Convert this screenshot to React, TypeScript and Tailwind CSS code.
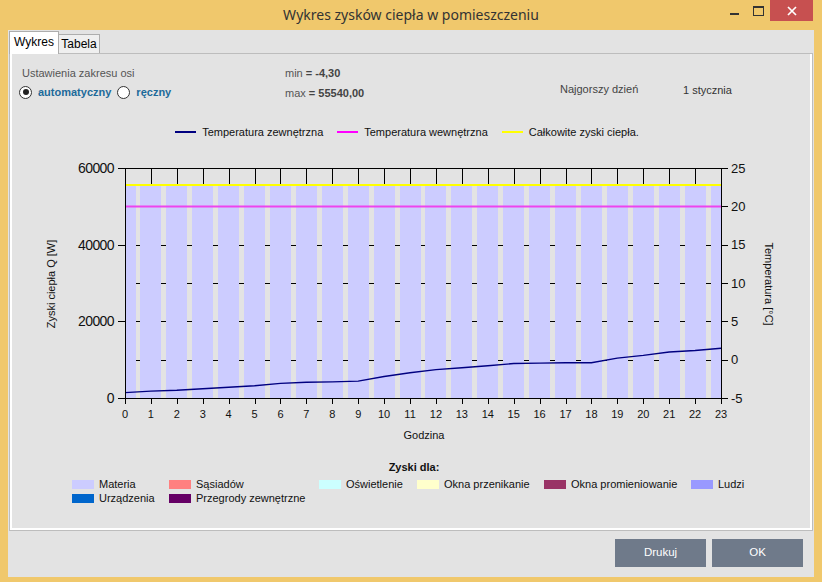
import React from 'react';

const X0 = 125;
const X1 = 721;
const YB = 398;
const YT = 168;
const hx = (h: number) => X0 + (h * (X1 - X0)) / 23;
const qy = (q: number) => YB - (q / 60000) * (YB - YT);
const ty = (t: number) => YB - ((t + 5) / 30) * (YB - YT);
const px = (v: number) => Math.round(v) + 0.5;

const hours = Array.from({ length: 24 }, (_, i) => i);
const temps = [-4.3, -4.1, -4.0, -3.8, -3.6, -3.4, -3.1, -2.95, -2.9, -2.8, -2.2, -1.7, -1.3, -1.05, -0.8, -0.5, -0.45, -0.4, -0.4, 0.2, 0.55, 1.0, 1.2, 1.5];

const legendItems = [
    { name: 'Materia', color: '#ccccff' },
    { name: 'Sąsiadów', color: '#ff8080' },
    { name: 'Oświetlenie', color: '#ccffff' },
    { name: 'Okna przenikanie', color: '#ffffcc' },
    { name: 'Okna promieniowanie', color: '#993366' },
    { name: 'Ludzi', color: '#9999ff' },
    { name: 'Urządzenia', color: '#0066cc' },
    { name: 'Przegrody zewnętrzne', color: '#660066' },
];

const Chart: React.FC = () => {
    const gridY = [ty(20), ty(15), ty(10), ty(5), ty(0), qy(20000), qy(40000)];
    const line = temps.map((t, i) => `${hx(i).toFixed(1)},${ty(t).toFixed(1)}`).join(' ');
    return (
        <svg width={802} height={304} viewBox="10 146 802 304" className="block" style={{ fontFamily: '"Liberation Sans", Arial, sans-serif' }}>
            {/* grid, hidden behind the bars */}
            <g stroke="#000" strokeWidth={1} shapeRendering="crispEdges">
                {gridY.map((y, i) => (
                    <line key={'gy' + i} x1={X0} x2={X1} y1={px(y)} y2={px(y)} />
                ))}
                {hours.map((h) => (
                    <line key={'gx' + h} x1={px(hx(h))} x2={px(hx(h))} y1={YT} y2={YB} />
                ))}
            </g>
            {/* bars */}
            <g fill="#ccccff" shapeRendering="crispEdges">
                {hours.map((h) => {
                    const a = Math.max(hx(h) - 10.5, X0);
                    const b = Math.min(hx(h) + 10.5, X1);
                    return <rect key={'b' + h} x={a} y={qy(55540)} width={b - a} height={YB - qy(55540)} />;
                })}
            </g>
            <line x1={X0} x2={X1} y1={185} y2={185} stroke="#ffff00" strokeWidth={2} />
            <line x1={X0} x2={X1} y1={206.5} y2={206.5} stroke="#ee44ee" strokeWidth={1.8} />
            <polyline points={line} fill="none" stroke="#000080" strokeWidth={1.4} />
            {/* axes */}
            <g stroke="#000" strokeWidth={1} shapeRendering="crispEdges">
                <line x1={X0 + 0.5} x2={X0 + 0.5} y1={YT} y2={YB} />
                <line x1={X1 + 0.5} x2={X1 + 0.5} y1={YT} y2={YB + 1} />
                <line x1={X0} x2={X1} y1={YT + 0.5} y2={YT + 0.5} />
                <line x1={X0} x2={X1 + 1} y1={YB + 0.5} y2={YB + 0.5} />
                {[0, 20000, 40000, 60000].map((q) => (
                    <line key={'lt' + q} x1={118} x2={X0} y1={px(qy(q))} y2={px(qy(q))} />
                ))}
                {[25, 20, 15, 10, 5, 0, -5].map((t) => (
                    <line key={'rt' + t} x1={X1} x2={728} y1={px(ty(t))} y2={px(ty(t))} />
                ))}
                {hours.map((h) => (
                    <line key={'bt' + h} x1={px(hx(h))} x2={px(hx(h))} y1={YB} y2={404} />
                ))}
            </g>
            <g fontSize={14} letterSpacing={-0.6} fill="#111" textAnchor="end">
                {[0, 20000, 40000, 60000].map((q) => (
                    <text key={'ll' + q} x={114} y={qy(q) + 5}>{q}</text>
                ))}
            </g>
            <g fontSize={13} fill="#111">
                {[25, 20, 15, 10, 5, 0, -5].map((t) => (
                    <text key={'rl' + t} x={731} y={ty(t) + 4.5}>{t}</text>
                ))}
            </g>
            <g fontSize={11} fill="#111" textAnchor="middle">
                {hours.map((h) => (
                    <text key={'hl' + h} x={hx(h)} y={418}>{h}</text>
                ))}
                <text x={424} y={439}>Godzina</text>
            </g>
            <text x={0} y={0} fontSize={11} fill="#111" textAnchor="middle" transform="translate(55 284) rotate(-90)">Zyski ciepła Q [W]</text>
            <text x={0} y={0} fontSize={11} fill="#111" textAnchor="middle" transform="translate(765 284) rotate(90)">Temperatura [°C]</text>
        </svg>
    );
};

const Radio: React.FC<{ checked?: boolean }> = ({ checked }) => (
    <span className="w-[13px] h-[13px] rounded-full border border-[#333] bg-white flex items-center justify-center">
        {checked && <span className="w-[6px] h-[6px] rounded-full bg-[#222]" />}
    </span>
);

const App: React.FC = () => {
    return (
        <div className="w-[822px] h-[582px] bg-[#f0c86c] flex flex-col overflow-hidden" style={{ fontFamily: '"Liberation Sans", Arial, sans-serif' }}>
            {/* title bar */}
            <div className="relative h-[30px] flex justify-end shrink-0">
                <div className="absolute inset-0 flex items-center justify-center text-[14px] text-[#333] pb-[1px]" style={{ fontFamily: '"Noto Sans", sans-serif' }}>
                    Wykres zysków ciepła w pomieszczeniu
                </div>
                <div className="relative flex h-[21px] mr-[9px]">
                    <div className="w-[26px] flex justify-center pt-[13px]">
                        <div className="w-[9px] h-[2px] bg-[#333]" />
                    </div>
                    <div className="w-[23px] flex justify-center pt-[6px]">
                        <div className="w-[11px] h-[10px] border border-[#333] border-t-2" />
                    </div>
                    <div className="w-[43px] bg-[#c75050] flex items-center justify-center">
                        <svg width="10" height="10" viewBox="0 0 10 10">
                            <path d="M1 1 L9 9 M9 1 L1 9" stroke="#fff" strokeWidth="1.7" />
                        </svg>
                    </div>
                </div>
            </div>

            {/* client */}
            <div className="flex-1 mx-[8px] mb-[5px] bg-[#e3e3e3] flex flex-col pt-[1px]">
                <div className="flex items-end h-[22px] ml-[1px] text-[12px] text-black">
                    <div className="relative z-10 h-[23px] -mb-px w-[50px] bg-white border-l border-t border-r border-[#adadad] flex items-center justify-center pb-[2px]">
                        Wykres
                    </div>
                    <div className="h-[19px] w-[41px] bg-[#efefef] border-t border-r border-[#adadad] flex items-center justify-center">
                        Tabela
                    </div>
                </div>

                <div className="ml-[1px] w-[804px] h-[478px] border border-[#bdbdbd] shadow-[inset_2px_0_0_#fff,inset_-2px_0_0_#fff,inset_0_-2px_0_#fff] flex flex-col">
                    {/* axis settings */}
                    <div className="h-[64px] flex text-[11px]">
                        <div className="w-[275px] pt-[12px]">
                            <div className="pl-[12px] leading-[14px] text-[#555]">Ustawienia zakresu osi</div>
                            <div className="flex items-center pl-[9px] mt-[5px] h-[14px] font-bold text-[#1c6a9a]">
                                <Radio checked />
                                <span className="ml-[6px]">automatyczny</span>
                                <span className="ml-[6px]"><Radio /></span>
                                <span className="ml-[6px]">ręczny</span>
                            </div>
                        </div>
                        <div className="w-[275px] pt-[12px] leading-[14px]">
                            <div><span className="text-[#555]">min</span> <span className="font-bold text-[#444]">= -4,30</span></div>
                            <div className="mt-[6px]"><span className="text-[#555]">max</span> <span className="font-bold text-[#444]">= 55540,00</span></div>
                        </div>
                        <div className="w-[123px] pt-[28px] leading-[14px] text-[#444]">Najgorszy dzień</div>
                        <div className="pt-[29px] leading-[14px] text-[#333]">1 stycznia</div>
                    </div>

                    {/* series legend */}
                    <div className="h-[28px] flex items-center justify-center gap-[14px] text-[11px] text-[#111] pr-[8px]">
                        <div className="flex items-center gap-[6px]">
                            <span className="w-[21px] h-[2px] bg-[#000080]" />
                            <span>Temperatura zewnętrzna</span>
                        </div>
                        <div className="flex items-center gap-[6px]">
                            <span className="w-[21px] h-[2px] bg-[#ff00ff]" />
                            <span>Temperatura wewnętrzna</span>
                        </div>
                        <div className="flex items-center gap-[6px]">
                            <span className="w-[21px] h-[2px] bg-[#ffff00]" />
                            <span>Całkowite zyski ciepła.</span>
                        </div>
                    </div>

                    <Chart />

                    {/* heat gains legend */}
                    <div className="pt-[10px] text-[11px] text-[#111]">
                        <div className="text-center font-bold leading-[14px] pl-[6px]">Zyski dla:</div>
                        <div className="mt-[3px] ml-[62px] grid grid-cols-[97px_150px_98px_127px_147px_auto]">
                            {legendItems.map((it) => (
                                <div key={it.name} className="flex items-center gap-[5px] h-[14px]">
                                    <span className="w-[22px] h-[9px]" style={{ backgroundColor: it.color }} />
                                    <span>{it.name}</span>
                                </div>
                            ))}
                        </div>
                    </div>
                </div>

                {/* buttons */}
                <div className="flex justify-end gap-[6px] pt-[8px] pr-[11px] text-[11.5px] text-white">
                    <button className="w-[91px] h-[28px] bg-[#6f7a8a]">Drukuj</button>
                    <button className="w-[91px] h-[28px] bg-[#6f7a8a]">OK</button>
                </div>
            </div>
        </div>
    );
};

export default App;
